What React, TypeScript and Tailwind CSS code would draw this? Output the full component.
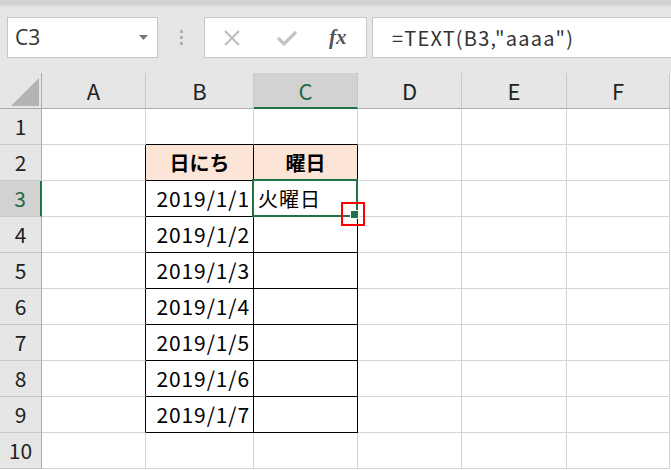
import React from "react";

const cols = ["A", "B", "C", "D", "E", "F"];
const colW = [104, 108, 104, 104, 105, 103];
const dates = ["2019/1/1", "2019/1/2", "2019/1/3", "2019/1/4", "2019/1/5", "2019/1/6", "2019/1/7"];

const cellFont = { fontFamily: '"Noto Sans CJK JP", "Noto Sans", sans-serif' };

export default function App() {
  const rows = Array.from({ length: 10 }, (_, i) => i + 1);
  return (
    <div className="w-[671px] h-[470px] overflow-hidden bg-white relative" style={{ fontFamily: '"Noto Sans CJK JP", sans-serif' }}>
      {/* toolbar */}
      <div className="h-[73px] bg-[#e6e6e6] flex flex-col">
        <div className="h-[5px] bg-[#d2d2d2]" />
        <div className="h-[2px] bg-[#dcdcdc]" />
        <div className="flex items-start pt-[10px] pl-[7px]">
          <div className="w-[151px] h-[41px] bg-white border border-[#c6c6c6] flex items-center justify-between pl-[7px] pr-[9px]">
            <span className="text-[21px] text-[#333] leading-none" style={{ fontFamily: '"Open Sans", sans-serif' }}>C3</span>
            <svg width="9" height="5" viewBox="0 0 9 5"><path d="M0 0 L9 0 L4.5 5 Z" fill="#777" /></svg>
          </div>
          <div className="w-[46px] h-[41px] flex flex-col items-center justify-center gap-[3px]">
            <div className="w-[3px] h-[3px] bg-[#b0b0b0]" />
            <div className="w-[3px] h-[3px] bg-[#b0b0b0]" />
            <div className="w-[3px] h-[3px] bg-[#b0b0b0]" />
          </div>
          <div className="w-[163px] h-[41px] bg-white border border-[#c6c6c6] flex items-center">
            <svg className="ml-[18px]" width="18" height="18" viewBox="0 0 18 18"><path d="M2 2 L16 16 M16 2 L2 16" stroke="#bdbdbd" strokeWidth="2" fill="none" /></svg>
            <svg className="ml-[36px]" width="20" height="16" viewBox="0 0 20 16"><path d="M1 8 L7 14 L19 2" stroke="#c4c4c4" strokeWidth="3.2" fill="none" /></svg>
            <span className="ml-[32px] text-[21px] italic font-bold text-[#555] leading-none" style={{ fontFamily: '"Liberation Serif", serif' }}>fx</span>
          </div>
          <div className="ml-[5px] flex-1 h-[41px] bg-white border border-[#c6c6c6] border-r-0 flex items-center pl-[19px]">
            <span className="text-[20px] text-[#333] leading-none tracking-[1.2px]" style={cellFont}>=TEXT(B3,"aaaa")</span>
          </div>
        </div>
      </div>

      {/* grid */}
      <div className="grid" style={{ gridTemplateColumns: `42px ${colW.map((w) => w + "px").join(" ")}` }}>
        {/* header row */}
        <div className="h-[36px] bg-[#e6e6e6] border-r border-b border-[#ababab] relative overflow-hidden">
          <svg className="absolute left-[11px] top-[5px]" width="28" height="28" viewBox="0 0 28 28"><path d="M28 0 L28 28 L0 28 Z" fill="#b4b4b4" /></svg>
        </div>
        {cols.map((c) => (
          <div
            key={c}
            className={
              "h-[36px] flex items-center justify-center text-[22px] border-r border-[#c8c8c8] " +
              (c === "C" ? "bg-[#d2d2d2] text-[#1e6b42] border-b-[2px] border-b-[#217346]" : "bg-[#e6e6e6] text-[#222] border-b border-b-[#ababab]")
            }
            style={cellFont}
          >
            {c}
          </div>
        ))}
        {rows.map((r) => (
          <React.Fragment key={r}>
            <div
              className={
                "h-[36px] flex items-center justify-center text-[21px] border-b border-[#c8c8c8] " +
                (r === 3 ? "bg-[#d2d2d2] text-[#1e6b42] border-r-[2px] border-r-[#217346]" : "bg-[#e6e6e6] text-[#222] border-r border-r-[#ababab]")
              }
              style={cellFont}
            >
              {r}
            </div>
            {cols.map((c) => {
              const inTable = (c === "B" || c === "C") && r >= 2 && r <= 9;
              const leftOfTable = c === "A" && r >= 2 && r <= 9;
              const aboveTable = (c === "B" || c === "C") && r === 1;
              const rightBlack = inTable || leftOfTable;
              const bottomBlack = inTable || aboveTable;
              const header = inTable && r === 2;
              let content: React.ReactNode = null;
              let align = "justify-end pr-[3px]";
              if (header) {
                content = <span className="font-bold text-[20px]">{c === "B" ? "日にち" : "曜日"}</span>;
                align = "justify-center";
              } else if (c === "B" && r >= 3 && r <= 9) {
                content = <span className="tracking-[0.9px]">{dates[r - 3]}</span>;
              } else if (c === "C" && r === 3) {
                content = <span className="text-[20px] tracking-[1px]">火曜日</span>;
                align = "justify-start pl-[4px]";
              }
              return (
                <div
                  key={c}
                  className={
                    "h-[36px] relative flex items-center text-[21px] text-black border-r border-b " +
                    align +
                    " " +
                    (rightBlack ? "border-r-black " : "border-r-[#d4d4d4] ") +
                    (bottomBlack ? "border-b-black " : "border-b-[#d4d4d4] ") +
                    (header ? "bg-[#fce4d6]" : "bg-white")
                  }
                  style={cellFont}
                >
                  {content}
                  {c === "C" && r === 3 && (
                    <>
                      <div className="absolute left-[-2px] top-[-2px] w-[106px] h-[38px] border-2 border-[#217346] pointer-events-none" />
                      <div className="absolute left-[87px] top-[21px] w-[24px] h-[24px] border-2 border-[#ff0000] z-10" />
                      <div className="absolute left-[96px] top-[29px] w-[7px] h-[7px] bg-[#217346] border border-white box-content z-20" />
                    </>
                  )}
                </div>
              );
            })}
          </React.Fragment>
        ))}
      </div>
    </div>
  );
}
